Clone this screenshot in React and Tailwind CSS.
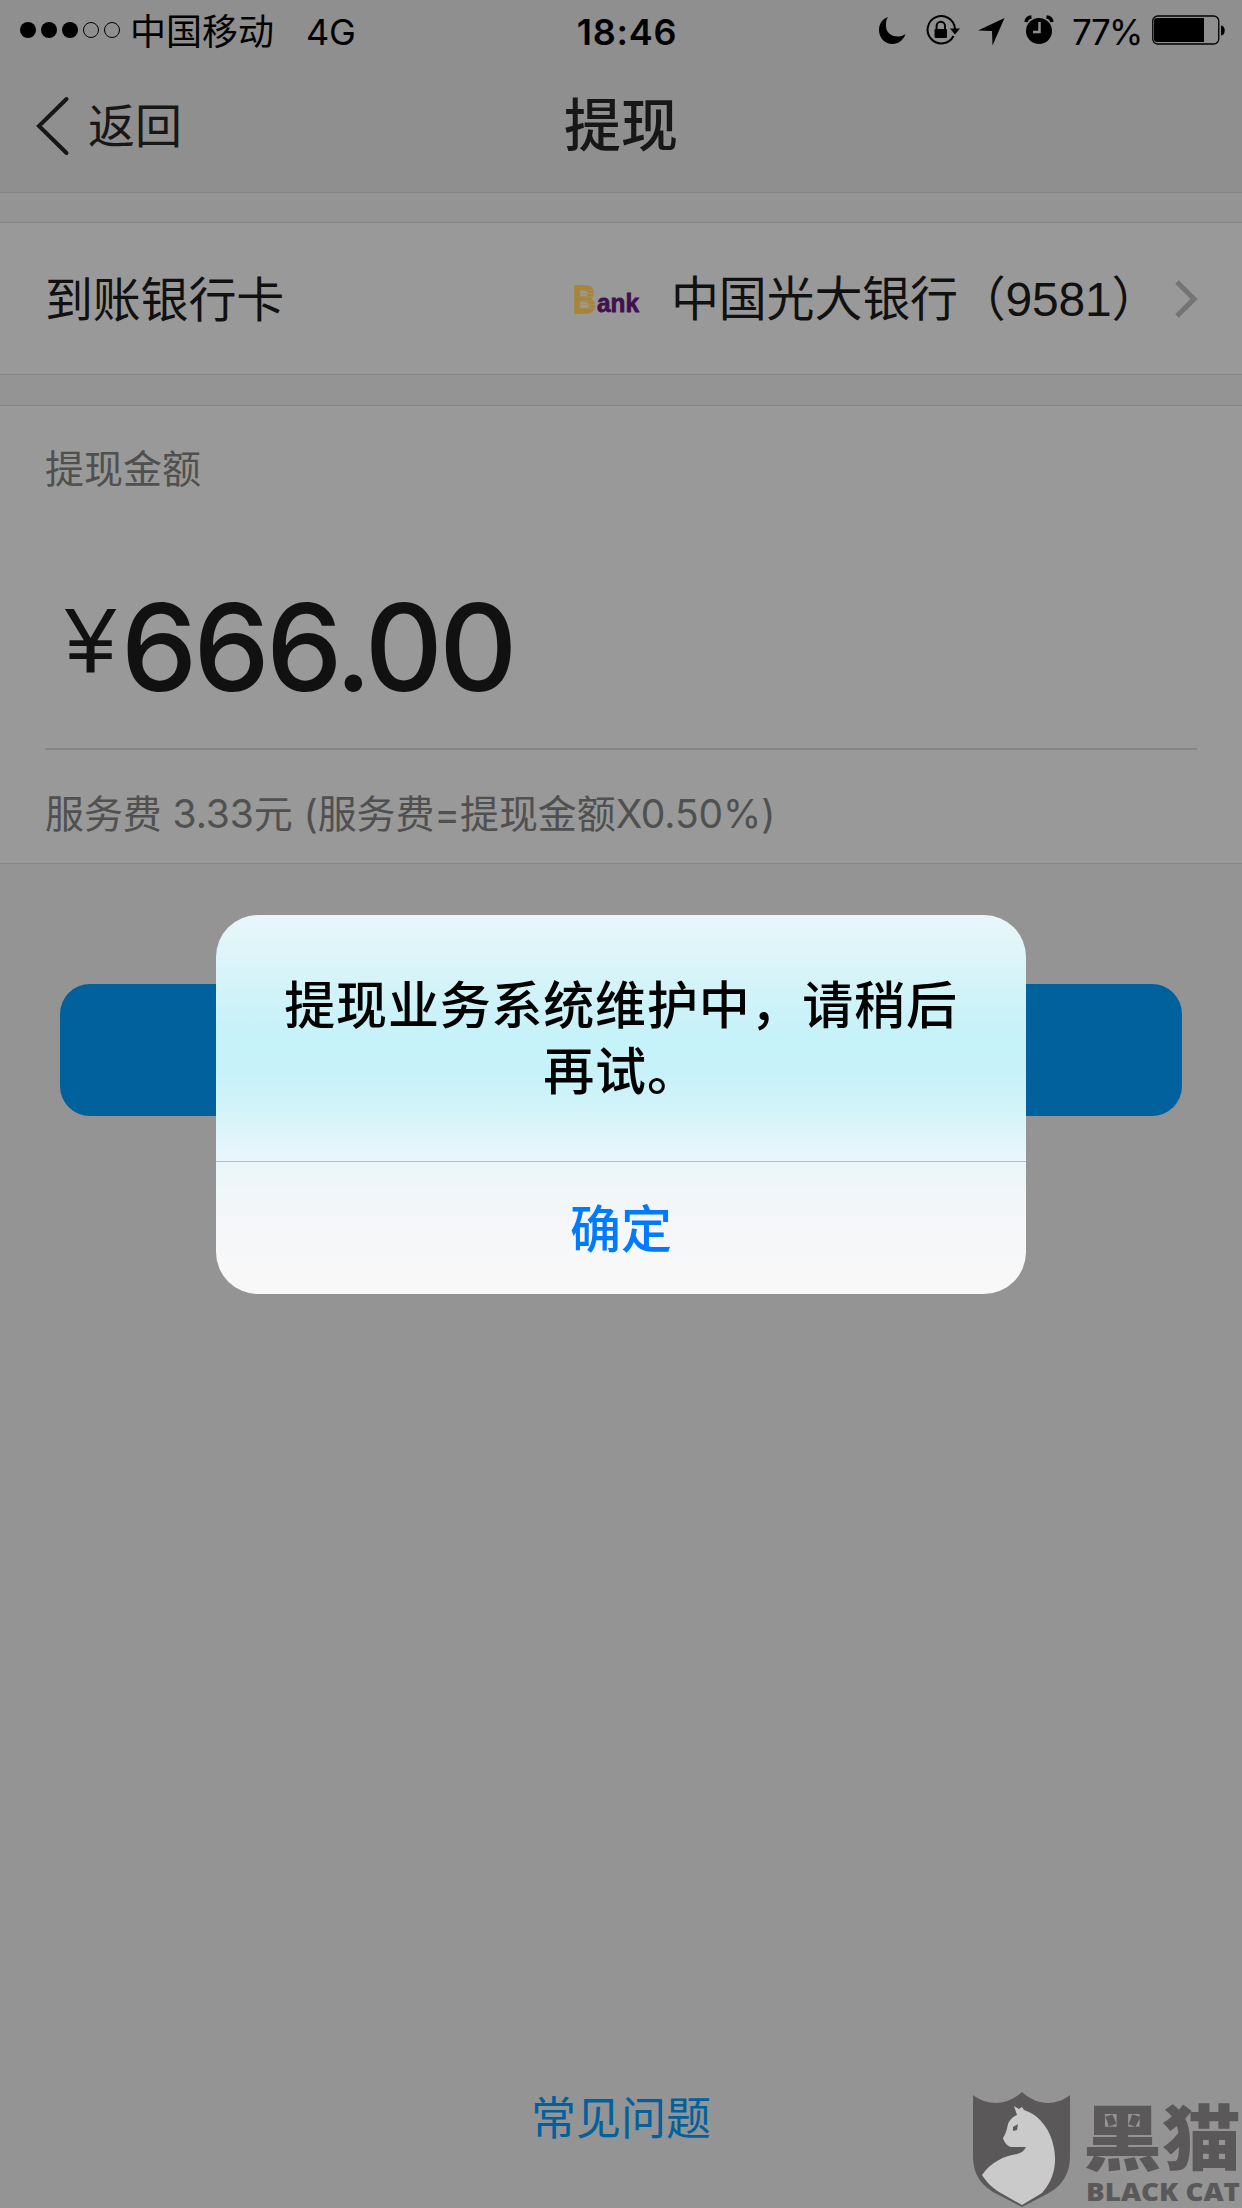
import React from 'react';

const StatusBar = () => (
    <div className="flex h-[60px] shrink-0 items-center text-black">
        <div className="flex w-[560px] items-center pl-5">
            <svg width="102" height="18" viewBox="0 0 102 18">
                {[8, 29, 50].map((cx) => <circle key={cx} cx={cx} cy="9" r="8" />)}
                {[71, 92].map((cx) => <circle key={cx} cx={cx} cy="9" r="7.5" fill="none" stroke="black" />)}
            </svg>
            <span className="ml-[8px] pt-[3px] text-[36px] leading-[60px]">中国移动</span>
            <span className="ml-[32px] pt-[3px] text-[36px] leading-[60px] tracking-[-0.3px]">4G</span>
        </div>
        <div className="w-[134px] pt-[3px] text-center text-[36px] font-semibold leading-[60px] tracking-[0.8px]">18:46</div>
        <div className="flex flex-1 items-center">
            {/* moon, rotation lock, location, alarm */}
            <svg className="ml-[184px] mt-[2px]" width="28" height="28" viewBox="0 0 28 28">
                <path d="M10 0C4 2 1 7 1 13c0 8 6 14 13.500 14 6 0 11-4 13-10-3 2-5 2.500-8 2.500C13 19.500 8 15 8 9c0-4 0-6 2-9z" />
            </svg>
            <svg className="ml-[19px]" width="36" height="32" viewBox="0 0 36 32">
                <path d="M28.500 22A13.700 13.700 0 1 1 30 15" fill="none" stroke="black" strokeWidth="2" />
                <path d="M25 14.500h10L30 20.500z" />
                <rect x="9.500" y="15" width="12.500" height="9" rx="1" />
                <path d="M11.600 16v-4a4.200 4.200 0 0 1 8.400 0v4" fill="none" stroke="black" strokeWidth="2" />
            </svg>
            <svg className="ml-[16px] mt-[3px]" width="28" height="28" viewBox="0 0 28 28">
                <path d="M27.500 0 1 12.500l14 .5.500 14.500z" />
            </svg>
            <svg className="ml-[19px]" width="30" height="30" viewBox="0 0 30 30">
                <circle cx="15" cy="16" r="13" />
                <path d="M2 7A6 6 0 0 1 7.500 2M22.500 2A6 6 0 0 1 28 7" fill="none" stroke="black" strokeWidth="3.500" />
                <path d="M15.500 7v10H9" fill="none" stroke="#8f8f8f" strokeWidth="2.500" />
            </svg>
            <span className="ml-[18px] w-[72px] pt-[3px] text-[35px] leading-[60px] tracking-[-1.6px]">77%</span>
            <svg className="ml-[8px]" width="74" height="30" viewBox="0 0 74 30">
                <rect x="0.750" y="1" width="66" height="28" rx="5" fill="none" stroke="black" strokeWidth="1.300" />
                <path d="M5 3h47v24H5a3 3 0 0 1-3-3V6a3 3 0 0 1 3-3z" />
                <path d="M69 10.500c5 0 5 10 0 10z" />
            </svg>
        </div>
    </div>
);

const NavBar = () => (
    <div className="flex h-[133px] shrink-0 items-center border-b border-[#84888b] text-[#171717]">
        <div className="flex w-[400px] items-center pl-[36px]">
            <svg width="34" height="60" viewBox="0 0 34 60">
                <path d="M30.500 3 3 30l27.500 27" fill="none" stroke="#171717" strokeWidth="4" strokeLinecap="round" />
            </svg>
            <span className="ml-[18px] text-[47px] leading-[132px]">返回</span>
        </div>
        <h1 className="w-[442px] text-center text-[57px] font-medium leading-[126px]">提现</h1>
    </div>
);

const BankLogo = () => (
    <svg className="overflow-visible" width="66" height="30" viewBox="0 0 66 30">
        <text x="-1" y="28.500" fontFamily="Liberation Sans" fontSize="39" fontWeight="700" fill="#a5853a" stroke="#a5853a" strokeWidth="1.500" textLength="23" lengthAdjust="spacingAndGlyphs">B</text>
        <path d="M5 6h15M5 9.500h15M5 13h13M5 17h15M5 20.500h16M5 24h15" stroke="#a5905f" strokeWidth="1" />
        <text x="23" y="28" fontFamily="Liberation Sans" fontSize="26" fontWeight="700" fill="#40104f" stroke="#40104f" strokeWidth="0.800" textLength="42" lengthAdjust="spacingAndGlyphs">ank</text>
    </svg>
);

const BankRow = () => (
    <div className="flex h-[153px] shrink-0 items-center border-y border-[#878787] bg-[#999999] pl-[45px] pr-[44px] text-[48px] text-[#111111]">
        <span className="pt-[3px] tracking-[-0.2px]">到账银行卡</span>
        <div className="ml-auto flex items-center">
            <BankLogo />
            <span className="ml-[31px] w-[489px] whitespace-nowrap pt-[3px] font-['Liberation_Sans','Noto_Sans_CJK_SC',sans-serif] tracking-[-0.2px]">中国光大银行（9581）</span>
            <svg className="ml-[14px]" width="24" height="40" viewBox="0 0 24 40">
                <path d="M3 3l17 17L3 37" fill="none" stroke="#747476" strokeWidth="5" />
            </svg>
        </div>
    </div>
);

const AmountCard = () => (
    <div className="flex h-[459px] shrink-0 flex-col border-y border-[#878787] bg-[#999999] px-[45px] text-[#505050]">
        <p className="mt-[33px] text-[39px] leading-[60px]">提现金额</p>
        <div className="flex h-[251px] items-start border-b-2 border-[#81878b] pl-[20px] text-[#111111]">
            <span className="mt-[92px] w-[56px] font-['Liberation_Sans',sans-serif] text-[92px] leading-[100px]">¥</span>
            <span className="mt-[73px] text-[121px] font-medium leading-[150px] tracking-[-3.600px]">666.00</span>
        </div>
        <p className="mt-[34px] whitespace-nowrap text-[39px] leading-[60px] tracking-[-0.1px]">服务费 3.33元 (服务费=提现金额X0.50%)</p>
    </div>
);

const AlertDialog = () => (
    <div className="absolute left-[216px] top-[915px] flex h-[379px] w-[810px] flex-col overflow-hidden rounded-[42px] text-center font-medium">
        <div className="h-[247px] border-b border-[#92cbd7] bg-[linear-gradient(#e9f6fa,#dff5f9_14%,#cff3f8_34%,#c6f2f9_50%,#c8f2f9_65%,#d0f4f8_78%,#e0f5fa_90%,#e9f6fa)] pt-[58px] text-[51px] leading-[66px] tracking-[0.8px] text-black">
            <p>提现业务系统维护中，请稍后</p>
            <p>再试。</p>
        </div>
        <button className="flex-1 bg-[linear-gradient(#eaf6f8,#f1f6f9_25%,#f6f7f9_50%,#f8f8f8)] pt-[5px] text-[51px] text-[#007aff]">确定</button>
    </div>
);

// brand mark in the bottom right corner
const BlackCatMark = () => (
    <svg className="absolute bottom-0 right-0 overflow-visible" width="272" height="118" viewBox="0 0 272 118">
        <path d="M3 5c16 12 35 10 49-3 14 13 33 15 48 3v61c0 22-12 32-23 38l-25 13-25-13C13 97 3 86 3 66z" fill="#5b5859" />
        <path d="M44 16l5 3 3-2 2 3c22 7 32 32 31 52-1 15-7 24-13 31l-20 12-23-13c-8-5-13-11-17-17 9-13 22-19 35-21 4-1 7-3 9-7H41c-4-1-7-5-8-9 3-5 4-9 5-14 2-5 6-8 9-9z" fill="#cacaca" />
        <path d="M43 37l5-3-1 6-4 1z" fill="#5b5859" />
        <text x="113" y="74" fontFamily="Noto Sans CJK SC" fontSize="71" fontWeight="900" fill="#5b5859" textLength="158" lengthAdjust="spacingAndGlyphs">黑猫</text>
        <text x="116" y="111" fontFamily="Open Sans" fontSize="24" fontWeight="800" fill="#5b5859" textLength="154" lengthAdjust="spacingAndGlyphs">BLACK CAT</text>
    </svg>
);

export default function App() {
    return (
        <div className="relative flex h-[2208px] w-[1242px] flex-col overflow-hidden bg-[#949494] font-['Inter','Noto_Sans_CJK_SC',sans-serif]">
            <div className="bg-[#8f8f8f]">
                <StatusBar />
                <NavBar />
            </div>
            <div className="mt-[29px] flex flex-col gap-[30px]">
                <BankRow />
                <AmountCard />
            </div>
            <div className="mx-[60px] mt-[120px] h-[132px] rounded-[30px] bg-[#00619d]"></div>
            <a className="mb-[56px] mt-auto text-center text-[45px] leading-[66px] text-[#00619d]">常见问题</a>
            <BlackCatMark />
            <AlertDialog />
        </div>
    );
}
